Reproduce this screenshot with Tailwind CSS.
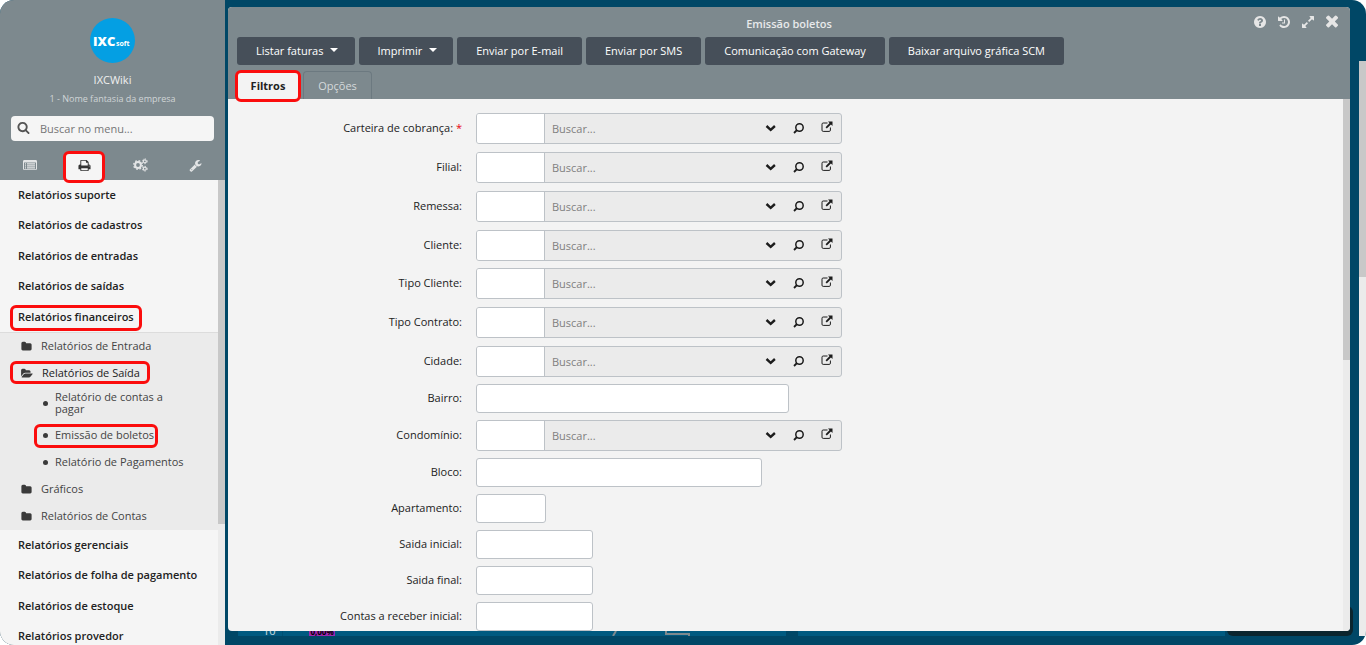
<!DOCTYPE html>
<html lang="pt-BR">
<head>
<meta charset="utf-8">
<meta name="viewport" content="width=device-width, initial-scale=1">
<title>Emissão boletos</title>
<script src="https://cdn.jsdelivr.net/npm/@tailwindcss/browser@4"></script>
</head>
<body class="bg-white font-['Open_Sans','Noto_Sans',sans-serif] text-[11px] text-[#222]">
<svg class="hidden">
  <symbol id="i-search" viewBox="0 0 1792 1792"><path d="M1216 832q0-185-131.5-316.5t-316.5-131.5-316.5 131.5-131.5 316.5 131.5 316.5 316.5 131.5 316.5-131.5 131.5-316.5zm512 832q0 52-38 90t-90 38q-54 0-90-38l-343-342q-179 124-399 124-143 0-273.5-55.5t-225-150-150-225-55.5-273.5 55.5-273.5 150-225 225-150 273.5-55.5 273.5 55.5 225 150 150 225 55.5 273.5q0 220-124 399l343 343q37 37 37 90z"/></symbol>
  <symbol id="i-print" viewBox="0 0 1792 1792"><path d="M448 1536h896v-256h-896v256zm0-640h896v-384h-160q-40 0-68-28t-28-68v-160h-640v640zm1152 64q0-26-19-45t-45-19-45 19-19 45 19 45 45 19 45-19 19-45zm128 0v416q0 13-9.5 22.5t-22.5 9.5h-224v160q0 40-28 68t-68 28h-960q-40 0-68-28t-28-68v-160h-224q-13 0-22.5-9.5t-9.5-22.5v-416q0-79 56.5-135.5t135.5-56.5h64v-544q0-40 28-68t68-28h672q40 0 88 20t76 48l152 152q28 28 48 76t20 88v256h64q79 0 135.5 56.5t56.5 135.5z"/></symbol>
  <symbol id="i-wrench" viewBox="0 0 1792 1792"><path d="M448 1472q0-26-19-45t-45-19-45 19-19 45 19 45 45 19 45-19 19-45zm644-420l-682 682q-37 37-90 37-52 0-91-37l-106-108q-38-36-38-90 0-53 38-91l681-681q39 98 114.5 173.5t173.5 114.5zm634-435q0 39-23 106-47 134-164.5 217.5t-258.5 83.5q-185 0-316.5-131.5t-131.5-316.5 131.5-316.5 316.5-131.5q58 0 121.5 16.5t107.5 46.5q16 11 16 28t-16 28l-293 169v224l193 107q5-3 79-48.5t135.5-81 70.5-35.5q15 0 23.5 10t8.5 25z"/></symbol>
  <symbol id="i-folder" viewBox="0 0 1792 1792"><path d="M1728 608v704q0 92-66 158t-158 66h-1216q-92 0-158-66t-66-158v-960q0-92 66-158t158-66h320q92 0 158 66t66 158v32h672q92 0 158 66t66 158z"/></symbol>
  <symbol id="i-open" viewBox="0 0 1920 1792"><path d="M1879 952q0 31-31 66l-336 396q-43 51-120.5 86.5t-143.5 35.5h-1088q-34 0-60.5-13t-26.5-43q0-31 31-66l336-396q43-51 120.5-86.5t143.5-35.5h1088q34 0 60.5 13t26.5 43zm-343-344v160h-832q-94 0-197 47.5t-164 119.5l-337 396-5 6q0-4-.5-12.5t-.5-12.5v-960q0-92 66-158t158-66h320q92 0 158 66t66 158v32h544q92 0 158 66t66 158z"/></symbol>
  <symbol id="i-help" viewBox="0 0 1792 1792"><path d="M1024 1376v-192q0-14-9-23t-23-9h-192q-14 0-23 9t-9 23v192q0 14 9 23t23 9h192q14 0 23-9t9-23zm256-672q0-88-55.5-163t-138.5-116-170-41q-243 0-371 213-15 24 8 42l132 100q7 6 19 6 16 0 25-12 53-68 86-92 34-24 86-24 48 0 85.500 26t37.500 59q0 38-20 61t-68 45q-63 28-115.500 86.500t-52.500 125.500v36q0 14 9 23t23 9h192q14 0 23-9t9-23q0-19 21.500-49.500t54.500-49.500q32-18 49-28.500t46-35 44.500-48 28-60.500 12.500-81zm384 192q0 209-103 385.500t-279.500 279.500-385.500 103-385.500-103-279.500-279.500-103-385.500 103-385.500 279.500-279.500 385.500-103 385.500 103 279.500 279.500 103 385.500z"/></symbol>
  <symbol id="i-history" viewBox="0 0 1792 1792"><path d="M1664 896q0 156-61 298t-164 245-245 164-298 61q-172 0-327-72.5t-264-204.5q-7-10-6.5-22.5t8.500-20.500l137-138q10-9 25-9 16 2 23 12 73 95 179 147t225 52q104 0 198.500-40.500t163.500-109.500 109.500-163.500 40.500-198.500-40.500-198.500-109.500-163.500-163.500-109.500-198.500-40.500q-98 0-188 35.500t-160 101.500l137 138q31 30 14 69-17 40-59 40h-448q-26 0-45-19t-19-45v-448q0-42 40-59 39-17 69 14l130 129q107-101 244.500-156.500t284.500-55.500q156 0 298 61t245 164 164 245 61 298zm-640-288v448q0 14-9 23t-23 9h-320q-14 0-23-9t-9-23v-64q0-14 9-23t23-9h224v-352q0-14 9-23t23-9h64q14 0 23 9t9 23z"/></symbol>
  <symbol id="i-expand" viewBox="0 0 1792 1792"><path d="M883 1056q0 13-10 23l-332 332 144 144q19 19 19 45t-19 45-45 19h-448q-26 0-45-19t-19-45v-448q0-26 19-45t45-19 45 19l144 144 332-332q10-10 23-10t23 10l114 114q10 10 10 23zm781-864v448q0 26-19 45t-45 19-45-19l-144-144-332 332q-10 10-23 10t-23-10l-114-114q-10-10-10-23t10-23l332-332-144-144q-19-19-19-45t19-45 45-19h448q26 0 45 19t19 45z"/></symbol>
  <symbol id="i-close" viewBox="200 320 1384 1384"><path d="M1490 1322q0 40-28 68l-136 136q-28 28-68 28t-68-28l-294-294-294 294q-28 28-68 28t-68-28l-136-136q-28-28-28-68t28-68l294-294-294-294q-28-28-28-68t28-68l136-136q28-28 68-28t68 28l294 294 294-294q28-28 68-28t68 28l136 136q28 28 28 68t-28 68l-294 294 294 294q28 28 28 68z"/></symbol>
  <symbol id="i-list" viewBox="0 0 14 12"><path fill-rule="evenodd" d="M1.500 1h11Q14 1 14 2.300v7.400Q14 11 12.500 11h-11Q0 11 0 9.700V2.300Q0 1 1.500 1zM1 3.500v6.200q0 .5.500.500h11q.5 0 .5-.5V3.500z"/><path d="M2 4.200h1v1.200H2zM4 4.200h8v1.200H4zM2 6.200h1v1.200H2zM4 6.200h8v1.200H4zM2 8.200h1v1.200H2zM4 8.200h8v1.200H4z"/></symbol>
  <symbol id="i-cogs" viewBox="0 0 15 14"><g fill="none" stroke="currentColor"><circle cx="5" cy="7" r="2.900" stroke-width="2"/><circle cx="5" cy="7" r="4.300" stroke-width="1.400" stroke-dasharray="1.690 1.690"/><circle cx="11.800" cy="3.300" r="1.500" stroke-width="1.200"/><circle cx="11.800" cy="3.300" r="2.400" stroke-width="1" stroke-dasharray="1.260 1.260"/><circle cx="11.800" cy="10.700" r="1.500" stroke-width="1.200"/><circle cx="11.800" cy="10.700" r="2.400" stroke-width="1" stroke-dasharray="1.260 1.260"/></g></symbol>
  <symbol id="i-chev" viewBox="0 0 12 12"><path d="M1.500 4l4.200 3.800L9.900 4" fill="none" stroke="currentColor" stroke-width="2.400"/></symbol>
  <symbol id="i-find" viewBox="0 0 12 12"><g fill="none" stroke="currentColor"><circle cx="6.500" cy="5.500" r="3.700" stroke-width="1.500"/><path d="M4 8L1 11" stroke-width="1.800"/></g></symbol>
  <symbol id="i-ext" viewBox="0 0 12 12"><path d="M6.500 2H2.200Q1 2 1 3.200v6Q1 10.400 2.200 10.400h6q1.200 0 1.200-1.200V6.500" fill="none" stroke="currentColor" stroke-width="1"/><path d="M5.200 6.800L10 2" stroke="currentColor" stroke-width="1.800"/><path d="M7 .5h4.500v4.500z"/></symbol>
</svg>

<div class="flex h-screen overflow-hidden rounded-[14px] bg-[#004766]">
  <aside class="flex w-[225px] shrink-0 flex-col bg-[#7d898e]">
    <header class="flex h-[180px] shrink-0 flex-col items-center pt-[18px] text-[#f0f0f0]">
      <svg class="size-[45px]" viewBox="0 0 45 45" role="img" aria-label="IXCsoft">
        <circle cx="22.500" cy="22.500" r="22.500" fill="#049fe3"/>
        <text x="3" y="28" font-family="Open Sans" font-weight="800" font-size="13" fill="#fff">IXC</text>
        <text x="26" y="28" font-family="Open Sans" font-weight="700" font-size="7" fill="#fff">soft</text>
      </svg>
      <p class="mt-2 leading-[18px]">IXCWiki</p>
      <p class="mt-[2px] text-[9px] leading-4 text-[#d0d5d7]">1 - Nome fantasia da empresa</p>
      <label class="mt-[9px] flex h-[25px] w-[203px] items-center rounded bg-[#f5f5f5] pl-[6px] text-[#555]">
        <svg class="mb-[2px] size-[13px] shrink-0 fill-current"><use href="#i-search"/></svg>
        <input type="search" aria-label="Buscar no menu" placeholder="Buscar no menu..." class="ml-[10px] w-full min-w-0 bg-transparent pt-px text-[11px] outline-none placeholder:text-[#757575]">
      </label>
      <nav class="mt-[10px] grid w-full grid-cols-4 px-[2px] text-[#e3e5e6]">
        <button aria-label="Cadastros" class="flex h-7 items-center justify-center"><svg class="h-3 w-[14px] fill-current"><use href="#i-list"/></svg></button>
        <button aria-label="Relatórios" class="relative flex h-7 items-center justify-center text-[#333]">
          <span class="absolute top-0 left-[6px] h-8 w-[42px] rounded-md border-3 border-[#fb0d0d] bg-[#f5f5f5]"></span>
          <svg class="relative size-[13px] fill-current"><use href="#i-print"/></svg></button>
        <button aria-label="Configurações" class="flex h-7 items-center justify-center"><svg class="h-[14px] w-[15px]"><use href="#i-cogs"/></svg></button>
        <button aria-label="Ferramentas" class="flex h-7 items-center justify-center"><svg class="size-[13px] fill-current"><use href="#i-wrench"/></svg></button>
      </nav>
    </header>
    <div class="flex min-h-0 flex-1">
      <nav class="min-w-0 flex-1 overflow-hidden bg-[#f5f5f5] font-semibold">
        <a href="#" class="flex h-[30px] items-center pl-[18px]">Relatórios suporte</a>
        <a href="#" class="flex h-[31px] items-center pl-[18px]">Relatórios de cadastros</a>
        <a href="#" class="flex h-[30px] items-center pl-[18px]">Relatórios de entradas</a>
        <a href="#" class="flex h-[31px] items-center pl-[18px]">Relatórios de saídas</a>
        <a href="#" class="relative flex h-[30px] items-center pl-[18px]">Relatórios financeiros<span class="absolute top-[3px] left-[10px] h-[26px] w-[132px] rounded-md border-3 border-[#fb0d0d]"></span></a>
        <div class="border-t border-[#dcdcdc] bg-[#ebebeb] font-normal text-[#444]">
          <a href="#" class="flex h-[27px] items-center gap-[9px] pl-[21px]"><svg class="size-[11px] fill-[#3a3a3a]"><use href="#i-folder"/></svg>Relatórios de Entrada</a>
          <a href="#" class="relative flex h-[27px] items-center gap-[9px] pl-[21px] text-[#222]"><svg class="h-[11px] w-[12px] fill-[#3a3a3a]"><use href="#i-open"/></svg>Relatórios de Saída<span class="absolute top-px left-[10px] h-[23px] w-[140px] rounded-md border-3 border-[#fb0d0d]"></span></a>
          <a href="#" class="flex h-[35px] items-center gap-[7px] pr-10 pb-[3px] pl-[43px] leading-3"><span class="size-[5px] shrink-0 rounded-full bg-[#3a3a3a]"></span>Relatório de contas a pagar</a>
          <a href="#" class="relative flex h-[27px] items-center gap-[7px] pl-[43px]"><span class="size-[5px] rounded-full bg-[#3a3a3a]"></span>Emissão de boletos<span class="absolute top-[2px] left-[34px] h-[24px] w-[124px] rounded-md border-3 border-[#fb0d0d]"></span></a>
          <a href="#" class="flex h-[27px] items-center gap-[7px] pl-[43px]"><span class="size-[5px] rounded-full bg-[#3a3a3a]"></span>Relatório de Pagamentos</a>
          <a href="#" class="flex h-[27px] items-center gap-[9px] pl-[21px]"><svg class="size-[11px] fill-[#3a3a3a]"><use href="#i-folder"/></svg>Gráficos</a>
          <a href="#" class="flex h-[27px] items-center gap-[9px] pl-[21px]"><svg class="size-[11px] fill-[#3a3a3a]"><use href="#i-folder"/></svg>Relatórios de Contas</a>
        </div>
        <a href="#" class="flex h-[30px] items-center pl-[18px]">Relatórios gerenciais</a>
        <a href="#" class="flex h-[31px] items-center pl-[18px]">Relatórios de folha de pagamento</a>
        <a href="#" class="flex h-[30px] items-center pl-[18px]">Relatórios de estoque</a>
        <a href="#" class="flex h-[31px] items-center pl-[18px]">Relatórios provedor</a>
      </nav>
      <div class="w-[7px] bg-[#ebebeb]"><div class="h-[74%] bg-[#c8c8c8]"></div></div>
    </div>
  </aside>

  <main class="relative flex min-w-0 flex-1 flex-col pt-[7px] pr-[9px] pb-[9px] pl-[3px]">
    <div class="absolute right-[6px] bottom-[9px] h-[30px] w-[126px] rounded-md bg-[#0b252e]"></div>
    <section class="relative flex min-h-0 flex-1 flex-col overflow-hidden rounded bg-[#f3f3f3]">
      <header class="relative bg-[#7d898e]">
        <h1 class="flex h-[30px] items-center justify-center pt-[4px] font-semibold text-[#e8eaeb]">Emissão boletos</h1>
        <div class="absolute top-2 right-[11px] flex gap-[10px] text-[#e6e6e6]">
          <button aria-label="Ajuda"><svg class="size-[14px] fill-current"><use href="#i-help"/></svg></button>
          <button aria-label="Histórico"><svg class="size-[14px] fill-current"><use href="#i-history"/></svg></button>
          <button aria-label="Expandir"><svg class="size-[14px] fill-current"><use href="#i-expand"/></svg></button>
          <button aria-label="Fechar"><svg class="size-[14px] fill-current"><use href="#i-close"/></svg></button>
        </div>
        <div class="flex gap-1 pl-[9px] font-medium text-white">
          <button class="flex h-7 items-center gap-[7px] rounded-[3px] bg-[#464f59] pr-[17px] pl-[19px]">Listar faturas<span class="mb-[2px] border-x-4 border-t-4 border-x-transparent"></span></button>
          <button class="flex h-7 items-center gap-[7px] rounded-[3px] bg-[#464f59] pr-4 pl-[18px]">Imprimir<span class="mb-[2px] border-x-4 border-t-4 border-x-transparent"></span></button>
          <button class="h-7 rounded-[3px] bg-[#464f59] px-[19px]">Enviar por E-mail</button>
          <button class="h-7 rounded-[3px] bg-[#464f59] px-[19px]">Enviar por SMS</button>
          <button class="h-7 rounded-[3px] bg-[#464f59] px-[19px]">Comunicação com Gateway</button>
          <button class="h-7 rounded-[3px] bg-[#464f59] px-[19px]">Baixar arquivo gráfica SCM</button>
        </div>
        <div class="flex gap-1 pt-[6px] pl-[9px]" role="tablist">
          <button role="tab" aria-selected="true" class="relative z-10 h-7 w-[62px] rounded-t bg-[#f3f3f3] pt-[2px] font-bold">Filtros<span class="absolute -inset-x-[2px] -top-px h-8 rounded-md border-3 border-[#fb0d0d]"></span></button>
          <button role="tab" aria-selected="false" class="h-7 w-[69px] rounded-t border border-b-0 border-[#6c7980] pt-px text-[#d5d9db]">Opções</button>
        </div>
      </header>
      <div class="flex min-h-0 flex-1">
        <form id="form" class="flex min-w-0 flex-1 flex-col gap-[7px] overflow-hidden pt-[14px]">
          <fieldset class="flex flex-col gap-2"></fieldset>
          <fieldset class="flex flex-col gap-2"></fieldset>
          <fieldset class="flex flex-col gap-[7px]"></fieldset>
        </form>
        <div class="w-[7px] bg-[#ebebeb]"><div class="h-[49%] bg-[#c8c8c8]"></div></div>
      </div>
    </section>
    <div class="mr-[125px] ml-[10px] flex h-[5px] gap-3 overflow-hidden">
      <div class="flex w-[548px] items-end bg-[#005a80] text-[11px] leading-[11px] text-white/80">
        <span class="w-[45px] border-r border-[#004f73] pl-[25px]">10</span>
        <span class="ml-[26px] w-[26px] bg-[#9c27b0] text-center text-[8px] leading-[9px] font-bold text-black">0,00%</span>
        <svg class="ml-[277px] h-[5px] w-20 shrink-0" viewBox="0 0 80 5"><path d="M4 0L1 5M54 0v3h23v2" fill="none" stroke="#7d898e" stroke-width="2"/></svg>
      </div>
      <div class="flex-1 bg-[#005a80]"></div>
    </div>
  </main>
  <div class="flex w-[7px] flex-col pt-[61px] pb-[9px]"><div class="flex-1 bg-[#ebebeb]"><div class="h-[216px] bg-[#c8c8c8]"></div></div></div>
</div>

<template id="combo">
  <div class="flex items-center">
    <label class="w-[234px] shrink-0 text-right"></label>
    <div class="ml-[14px] flex h-[31px] w-[366px] overflow-hidden rounded-[3px] border border-[#bdc2c7] bg-[#ebebeb]">
      <input type="text" class="w-[68px] border-r border-[#bdc2c7] bg-white px-2 outline-none">
      <input type="text" placeholder="Buscar..." aria-label="Buscar" class="min-w-0 flex-1 bg-transparent pt-px pl-[7px] outline-none placeholder:text-[#808080]">
      <div class="flex items-center gap-4 pr-2 pb-px text-[#1c1c1c]">
        <button type="button" aria-label="Abrir lista"><svg class="size-3"><use href="#i-chev"/></svg></button>
        <button type="button" aria-label="Pesquisar"><svg class="size-3"><use href="#i-find"/></svg></button>
        <button type="button" aria-label="Abrir cadastro" class="pb-[3px]"><svg class="size-3 fill-current"><use href="#i-ext"/></svg></button>
      </div>
    </div>
  </div>
</template>
<template id="plain">
  <div class="flex items-center">
    <label class="w-[234px] shrink-0 text-right"></label>
    <input type="text" class="ml-[14px] h-[29px] rounded-[3px] border border-[#bdc2c7] bg-white px-2 outline-none">
  </div>
</template>
<script>
  const groups = [
    [['Carteira de cobrança:'], ['Filial:'], ['Remessa:'], ['Cliente:']],
    [['Tipo Cliente:'], ['Tipo Contrato:'], ['Cidade:']],
    [['Bairro:', 313], ['Condomínio:'], ['Bloco:', 286], ['Apartamento:', 70], ['Saida inicial:', 117], ['Saida final:', 117], ['Contas a receber inicial:', 117]]
  ];
  const sets = document.querySelectorAll('#form fieldset');
  groups.forEach((fields, g) => fields.forEach(([name, width], i) => {
    const row = document.getElementById(width ? 'plain' : 'combo').content.cloneNode(true);
    const label = row.querySelector('label'), input = row.querySelector('input');
    label.textContent = name;
    if (g === 0 && i === 0) {
      const star = document.createElement('span');
      star.textContent = ' *';
      star.className = 'text-red-600';
      label.append(star);
    }
    input.id = 'field-' + g + '-' + i;
    label.htmlFor = input.id;
    if (width) input.style.width = width + 'px';
    sets[g].append(row);
  }));
</script>
</body>
</html>
